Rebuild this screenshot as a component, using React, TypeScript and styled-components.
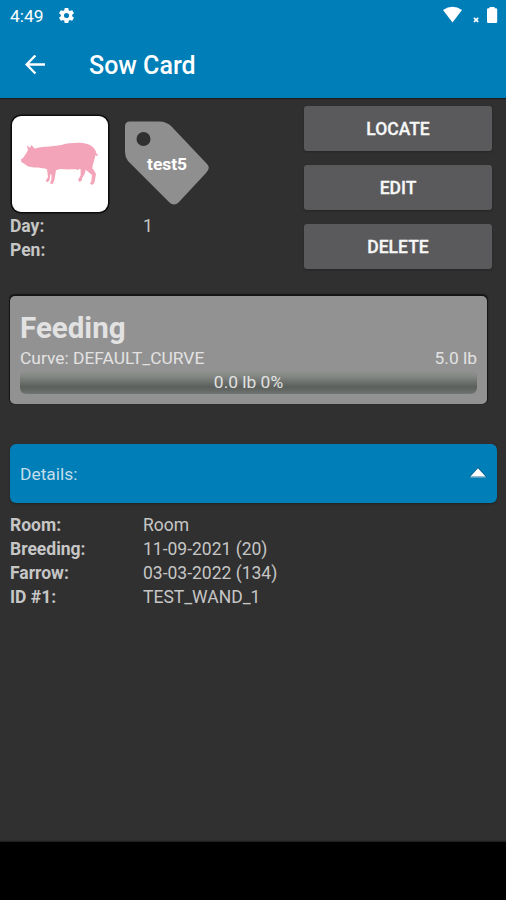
import React from "react";
import styled, { createGlobalStyle } from "styled-components";

const GlobalStyle = createGlobalStyle`
  *, *::before, *::after { box-sizing: border-box; }
  body { margin: 0; background: #303030; }
`;

const Screen = styled.div`
  width: 506px;
  height: 900px;
  display: flex;
  flex-direction: column;
  overflow: hidden;
  background: #303030;
  color: #c6c6c6;
  font-family: Roboto, sans-serif;
  font-size: 17.4px;
  line-height: 24px;
`;

const Header = styled.header`
  flex: none;
  height: 98px;
  background: #007eb8;
  color: #fff;
  box-shadow: 0 1px 1px #1c1c1c;
`;

const StatusBar = styled.div`
  height: 32px;
  display: flex;
  align-items: center;
  padding: 0 8px 0 10px;
`;

const Clock = styled.span`
  width: 47px;
  font-size: 17.4px;
`;

const StatusIcons = styled.div`
  margin-left: auto;
  display: flex;
  height: 32px;
`;

const AppBar = styled.div`
  height: 66px;
  display: flex;
  align-items: center;
  padding-left: 25px;
`;

const Title = styled.h1`
  margin: 1px 0 0 44px;
  font-size: 25px;
  font-weight: 500;
  line-height: 30px;
`;

const Content = styled.main`
  flex: 1;
  padding: 8px 9px 0 10px;
`;

const Summary = styled.section`
  height: 190px;
  display: flex;
  justify-content: space-between;
  padding-right: 5px;
`;

const Identity = styled.div`
  padding-top: 9px;
`;

const Badges = styled.div`
  display: flex;
  gap: 16px;
  margin-bottom: 2px;
`;

const Portrait = styled.div`
  width: 96px;
  height: 96px;
  margin: 1px 0 0 2px;
  border-radius: 9px;
  background: #fff;
  box-shadow: 0 0 0 1.5px #0c0c0c;
`;

const Tag = styled.div`
  position: relative;
  width: 86px;
  height: 92px;
  margin-top: 5px;
`;

const TagLabel = styled.span`
  position: absolute;
  left: 23px;
  top: 32px;
  color: #fff;
  font-weight: 700;
`;

const Actions = styled.div`
  display: flex;
  flex-direction: column;
  gap: 14px;
  width: 188px;
`;

const ActionButton = styled.button`
  height: 45px;
  padding: 1px 0 0;
  border: 0;
  border-radius: 3px;
  background: #5a5a5c;
  box-shadow: 0 1px 2px #252525;
  color: #f7f7f7;
  font: 500 17.5px/24px Roboto, sans-serif;
  -webkit-text-stroke: 0.3px #f7f7f7;
`;

const FeedCard = styled.section`
  width: 477px;
  height: 108px;
  padding: 14px 10px 0;
  border-radius: 5px;
  background: #929292;
  box-shadow: 0 -1px 1px 0.5px #151515;
  color: #e2e2e2;
`;

const FeedTitle = styled.h2`
  margin: 0;
  font-size: 29.5px;
  font-weight: 700;
  line-height: 36px;
`;

const FeedRow = styled.div`
  display: flex;
  justify-content: space-between;
`;

const Progress = styled.div`
  height: 24px;
  border-radius: 6px;
  background: linear-gradient(#929292 0%, #878a87 22%, #5c605c 70%, #646864 85%, #737773 100%);
  text-align: center;
  line-height: 21px;
  padding-top: 2px;
`;

const DetailsBar = styled.button`
  width: 487px;
  height: 59px;
  margin-top: 40px;
  padding: 0 10px;
  display: flex;
  align-items: center;
  justify-content: space-between;
  border: 0;
  border-radius: 6px;
  background: #007eb8;
  box-shadow: 0 1px 2px #222;
  color: #c5dde8;
  font: 400 17.4px/24px Roboto, sans-serif;
`;

const Fields = styled.dl`
  display: grid;
  grid-template-columns: 133px auto;
  grid-auto-rows: 24px;
  margin: 0;
`;

const DetailFields = styled(Fields)`
  margin-top: 10px;
`;

const Name = styled.dt`
  font-weight: 700;
  font-size: 17.5px;
`;

const Value = styled.dd`
  margin: 0;
  font-size: 17.5px;
`;

const NavBar = styled.footer`
  flex: none;
  height: 58px;
  background: #000;
  box-shadow: 0 -1px 1px #202020;
`;

const Gear = styled.svg`
  margin-bottom: 2px;
`;

const GearIcon = () => (
  <Gear width="19" height="19" viewBox="0 0 24 24" fill="#fff">
    <path d="M19.14 12.94c.04-.3.06-.61.06-.94s-.02-.64-.07-.94l2.03-1.58a.49.49 0 0 0 .12-.61l-1.92-3.32a.49.49 0 0 0-.59-.22l-2.39.96a7 7 0 0 0-1.62-.94l-.36-2.54a.48.48 0 0 0-.48-.41h-3.84a.47.47 0 0 0-.47.41l-.36 2.54c-.59.24-1.13.57-1.62.94l-2.39-.96a.47.47 0 0 0-.59.22L2.74 8.87a.47.47 0 0 0 .12.61l2.03 1.58A7.6 7.6 0 0 0 4.8 12c0 .31.02.64.07.94l-2.03 1.58a.49.49 0 0 0-.12.61l1.92 3.32c.12.22.37.29.59.22l2.39-.96c.5.38 1.03.7 1.62.94l.36 2.54c.05.24.24.41.48.41h3.84c.24 0 .44-.17.47-.41l.36-2.54a7 7 0 0 0 1.62-.94l2.39.96c.22.08.47 0 .59-.22l1.92-3.32a.47.47 0 0 0-.12-.61zM12 15.2a3.2 3.2 0 1 1 0-6.4 3.2 3.2 0 0 1 0 6.4z" />
  </Gear>
);

const SignalIcons = () => (
  <svg width="56" height="32" viewBox="0 0 56 32" fill="#fff">
    <path d="M1 10Q10.5 3.5 20 10L10.5 22.5Z" />
    <path d="m32 17.8 4.2 4.2m0-4.2L32 22" stroke="#fff" strokeWidth="1.7" />
    <path d="M45 9.5q0-1.3 1.3-1.3h1.3V7h5v1.2h1.3q1.3 0 1.3 1.3v12.2q0 1.3-1.3 1.3h-7.6Q45 23 45 21.7z" />
  </svg>
);

const BackIcon = () => (
  <svg width="20" height="20" viewBox="0 0 20 20" fill="none" stroke="#fff" strokeWidth="2.4">
    <path d="M20 9.5H2M10.4.5 1.6 9.5l8.8 9" />
  </svg>
);

const PigIcon = () => (
  <svg width="96" height="96" viewBox="36 33 288 288" fill="#f4a4b8">
    <path d="M80 121l10 7 4-8 8 8 2 3C118 124 151 126 187 119C208 113 244 111 262 117C279 122 289 136 290 148L294 147L291 154L286 151C285 163 278 176 277 190Q284 198 288 207L283 234L276 240L270 236L274 229L276 210L257 194Q256 207 246 220L245 227L239 231L234 225L242 211L242 193Q238 190 234 195C222 191 207 195 180 192L168 196L163 226L158 238L150 235L154 225L155 211L151 207L149 226L142 232L137 228L144 216L141 193C124 187 101 189 83 184L74 177L64 171L63 163L69 159L80 143L84 134Z" />
  </svg>
);

const TagShape = () => (
  <svg width="86" height="92" viewBox="0 0 86 92">
    <path
      d="M6 1.5H35Q43 1.5 48 7L83 44Q87 48 82 53L55 82Q50 87 45 82L4 41Q1 37 1 32V6.5Q1 1.5 6 1.5Z"
      fill="#8f8f8f"
    />
    <circle cx="19.5" cy="19" r="7" fill="#303030" />
  </svg>
);

const CollapseIcon = () => (
  <svg width="18" height="14" viewBox="0 0 18 14">
    <path d="M9 0 18 10H0Z" fill="#075078" opacity=".65" />
    <path d="M9 1.2 16.6 9.5H1.4Z" fill="#fff" />
    <path d="M1.2 10H16.8" stroke="#a1bfd2" />
  </svg>
);

const details = [
  ["Room:", "Room"],
  ["Breeding:", "11-09-2021 (20)"],
  ["Farrow:", "03-03-2022 (134)"],
  ["ID #1:", "TEST_WAND_1"],
];

export default function App() {
  return (
    <>
      <GlobalStyle />
      <Screen>
        <Header>
          <StatusBar>
            <Clock>4:49</Clock>
            <GearIcon />
            <StatusIcons>
              <SignalIcons />
            </StatusIcons>
          </StatusBar>
          <AppBar>
            <BackIcon />
            <Title>Sow Card</Title>
          </AppBar>
        </Header>
        <Content>
          <Summary>
            <Identity>
              <Badges>
                <Portrait>
                  <PigIcon />
                </Portrait>
                <Tag>
                  <TagShape />
                  <TagLabel>test5</TagLabel>
                </Tag>
              </Badges>
              <Fields>
                <Name>Day:</Name>
                <Value>1</Value>
                <Name>Pen:</Name>
                <Value />
              </Fields>
            </Identity>
            <Actions>
              <ActionButton>LOCATE</ActionButton>
              <ActionButton>EDIT</ActionButton>
              <ActionButton>DELETE</ActionButton>
            </Actions>
          </Summary>
          <FeedCard>
            <FeedTitle>Feeding</FeedTitle>
            <FeedRow>
              <span>Curve: DEFAULT_CURVE</span>
              <span>5.0 lb</span>
            </FeedRow>
            <Progress>0.0 lb 0%</Progress>
          </FeedCard>
          <DetailsBar>
            <span>Details:</span>
            <CollapseIcon />
          </DetailsBar>
          <DetailFields>
            {details.map(([name, value]) => (
              <React.Fragment key={name}>
                <Name>{name}</Name>
                <Value>{value}</Value>
              </React.Fragment>
            ))}
          </DetailFields>
        </Content>
        <NavBar />
      </Screen>
    </>
  );
}
